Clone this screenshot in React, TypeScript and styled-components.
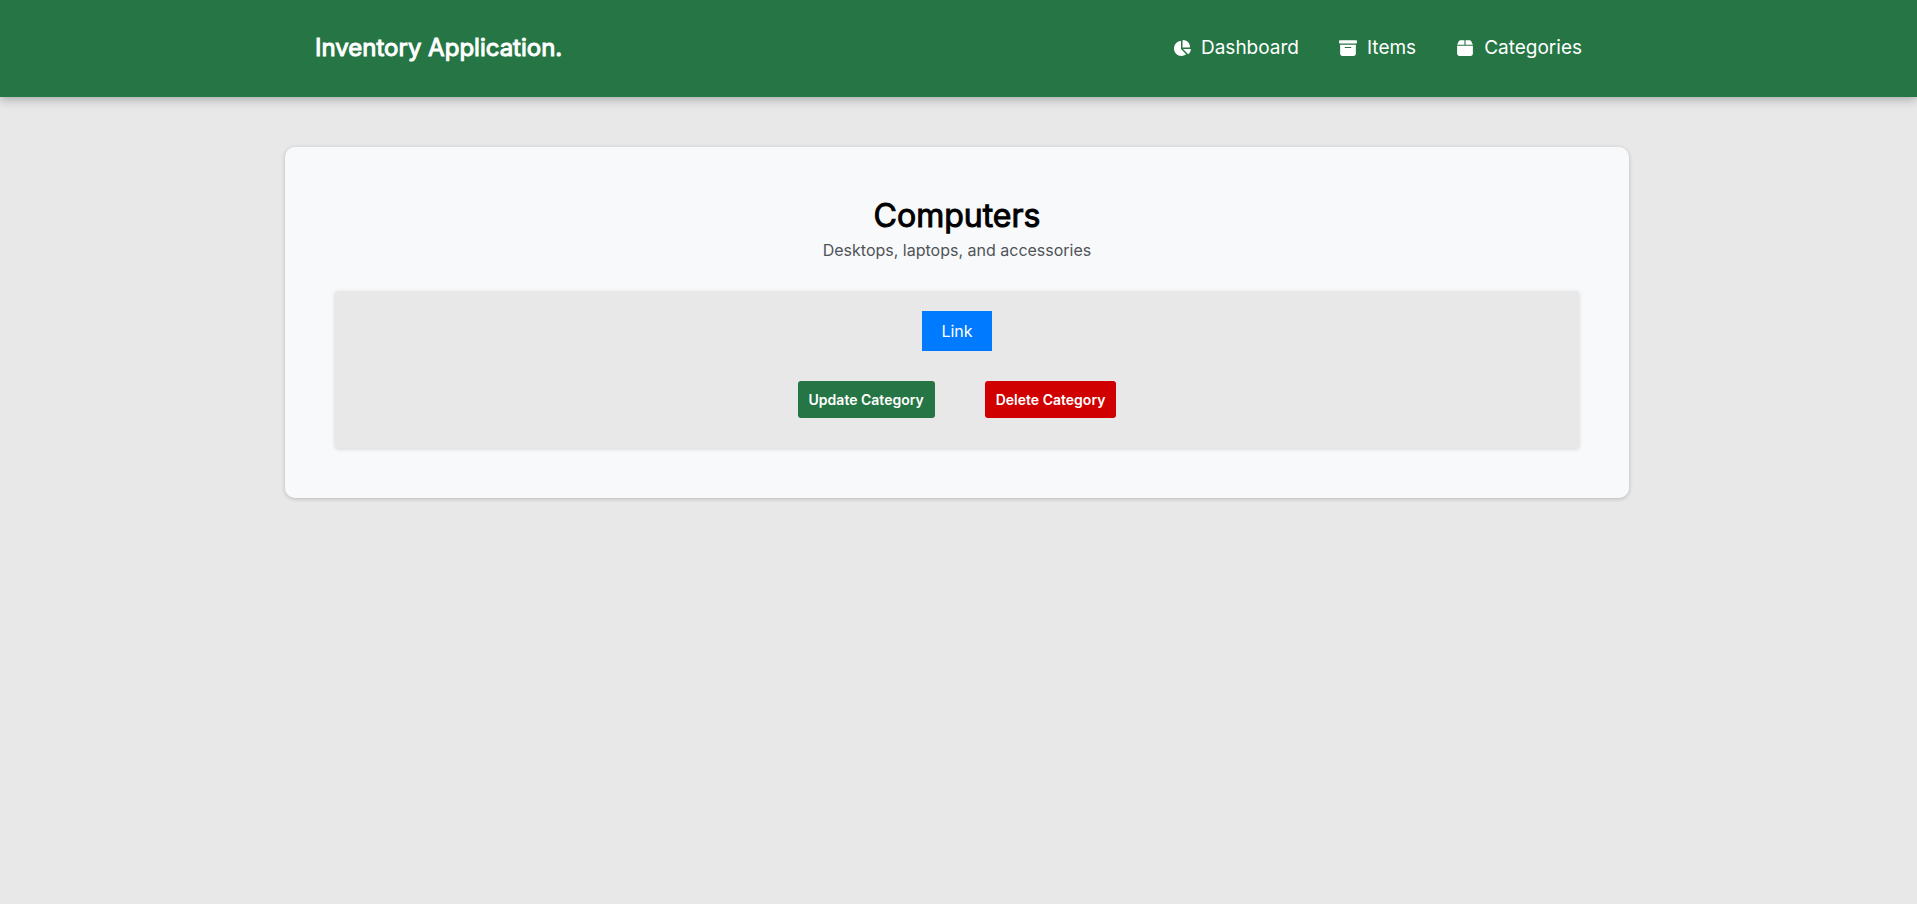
import React from 'react';
import styled, { createGlobalStyle, css } from 'styled-components';
import { FaChartPie, FaBoxArchive, FaBox } from 'react-icons/fa6';

const GlobalStyle = createGlobalStyle`
  * { box-sizing: border-box; margin: 0; padding: 0; }
  body { background: #e8e8e8; font-family: Inter, sans-serif; color: #000; }
`;
const emphasis = css`
  font-weight: 400;
  -webkit-text-stroke: 1px currentColor;
`;
const Header = styled.header`
  background: #267645;
  box-shadow: 0 2px 10px rgba(0, 0, 0, 0.3);
`;
const HeaderInner = styled.div`
  display: flex;
  align-items: center;
  justify-content: space-between;
  margin: 0 335px 0 315px;
  padding: 32px 0 33px;
`;
const Brand = styled.h1`
  ${emphasis}
  color: #fff;
  font-size: 24px;
  line-height: 32px;
`;
const Nav = styled.nav`
  display: flex;
  gap: 40px;
`;
const NavLink = styled.a`
  display: flex;
  align-items: center;
  gap: 10px;
  color: #fff;
  font-size: 19px;
  line-height: 24px;
  text-decoration: none;
  svg { width: 18px; height: 18px; }
`;
const Card = styled.main`
  margin: 50px 288px 50px 285px;
  padding: 50px;
  border-radius: 10px;
  background: #f8f9fb;
  box-shadow: 0 1px 4px rgba(0, 0, 0, 0.2);
  text-align: center;
`;
const Title = styled.h2`
  ${emphasis}
  font-size: 32px;
  line-height: 38px;
`;
const Description = styled.p`
  margin: 3px 0 29px;
  font-size: 16px;
  line-height: 24px;
  color: #4f5358;
`;
const Panel = styled.section`
  display: flex;
  flex-direction: column;
  align-items: center;
  gap: 30px;
  padding: 20px 20px 30px;
  border-radius: 3px;
  background: #e8e8e8;
  box-shadow: 0 1px 4px rgba(0, 0, 0, 0.15);
`;
const ItemLink = styled.a`
  padding: 10px 19px;
  background: #007bff;
  color: #fff;
  font-size: 16px;
  line-height: 20px;
  text-decoration: none;
`;
const Actions = styled.div`
  display: flex;
  gap: 50px;
`;
const ActionButton = styled.button<{ $color: string }>`
  padding: 10px 11px;
  border: 0;
  border-radius: 3px;
  background: ${({ $color }) => $color};
  color: #fff;
  font: 600 14px/17px Inter, sans-serif;
  cursor: pointer;
`;

export default function App() {
  return (
    <>
      <GlobalStyle />
      <Header>
        <HeaderInner>
          <Brand>Inventory Application.</Brand>
          <Nav>
            <NavLink href="#dashboard"><FaChartPie />Dashboard</NavLink>
            <NavLink href="#items"><FaBoxArchive />Items</NavLink>
            <NavLink href="#categories"><FaBox />Categories</NavLink>
          </Nav>
        </HeaderInner>
      </Header>
      <Card>
        <Title>Computers</Title>
        <Description>Desktops, laptops, and accessories</Description>
        <Panel>
          <ItemLink href="#link">Link</ItemLink>
          <Actions>
            <ActionButton type="button" $color="#267645">Update Category</ActionButton>
            <ActionButton type="button" $color="#d10000">Delete Category</ActionButton>
          </Actions>
        </Panel>
      </Card>
    </>
  );
}
